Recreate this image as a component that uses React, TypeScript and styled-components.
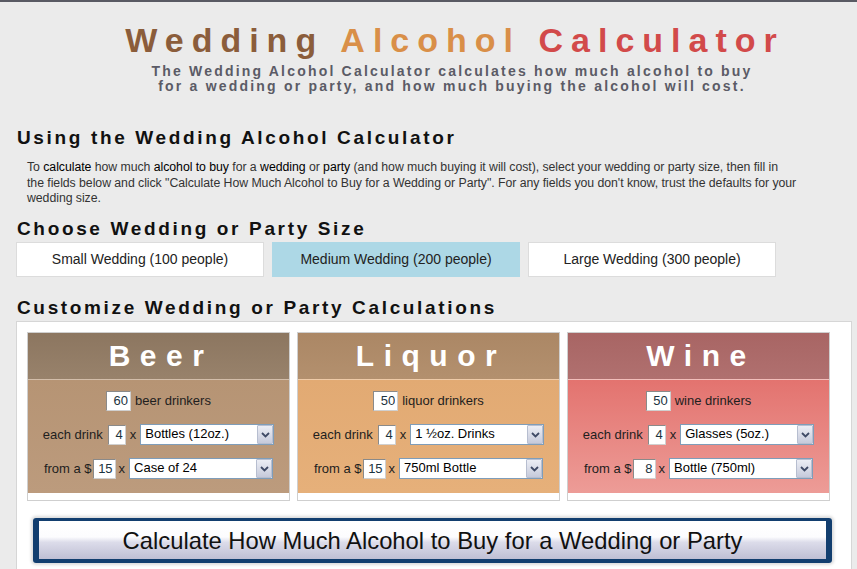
import React from "react";
import styled, { createGlobalStyle } from "styled-components";

const GlobalStyle = createGlobalStyle`
  html, body {
    margin: 0;
    padding: 0;
    background: #ebebeb;
  }
  body {
    font-family: "Liberation Sans", Arial, sans-serif;
    color: #222;
  }
`;

const Page = styled.div`
  min-height: 100vh;
  background: #ebebeb;
  border-top: 2px solid #595a63;
  padding-left: 16px;
  overflow: hidden;
  box-sizing: border-box;
`;

const Masthead = styled.header`
  width: 836px;
  box-sizing: border-box;
  padding-left: 42px;
  margin-top: 18px;
  text-align: center;
`;

const Title = styled.h1`
  margin: 0;
  font-size: 34px;
  line-height: 40px;
  font-weight: bold;
  letter-spacing: 8px;
  white-space: nowrap;
`;

const TitleWord = styled.span<{ $color: string }>`
  color: ${(p) => p.$color};
`;

const Tagline = styled.p`
  margin: 4px 0 0;
  padding-right: 6px;
  font-size: 14px;
  line-height: 15px;
  font-weight: bold;
  letter-spacing: 2.2px;
  color: #5b5b66;
  white-space: nowrap;
`;

const SectionTitle = styled.h2<{ $top: number }>`
  margin: ${(p) => p.$top}px 0 0 1px;
  font-size: 19px;
  line-height: 22px;
  font-weight: bold;
  letter-spacing: 2.65px;
  color: #111;
  white-space: nowrap;
`;

const Intro = styled.p`
  margin: 11px 0 0 11px;
  font-size: 12.3px;
  line-height: 15.5px;
  letter-spacing: -0.05px;
  color: #333;
  white-space: nowrap;
`;

const Key = styled.span`
  color: #000;
`;

const SizeRow = styled.div`
  display: flex;
  gap: 8px;
  margin-top: 2px;
`;

const SizeButton = styled.div<{ $active?: boolean }>`
  width: 248px;
  height: 35px;
  box-sizing: border-box;
  display: flex;
  align-items: center;
  justify-content: center;
  border: 1px solid ${(p) => (p.$active ? "#add8e6" : "#dcdcdc")};
  background: ${(p) => (p.$active ? "#add8e6" : "#fff")};
  font-size: 14px;
  color: #222;
  cursor: pointer;
`;

const Panel = styled.section`
  margin-top: 2px;
  width: 836px;
  box-sizing: border-box;
  background: #fff;
  border: 1px solid #d6d6d6;
  border-bottom: none;
  padding: 10px 0 20px 10px;
`;

const Cards = styled.div`
  display: flex;
  gap: 7px;
`;

const Card = styled.div`
  width: 263px;
  box-sizing: border-box;
  border: 1px solid #cfcfcf;
  background: #fff;
  padding-bottom: 7px;
`;

const CardHead = styled.div<{ $bg: string }>`
  height: 46px;
  line-height: 46px;
  padding-left: 5px;
  background: ${(p) => p.$bg};
  color: #fff;
  font-size: 30px;
  font-weight: bold;
  letter-spacing: 9.5px;
  text-align: center;
`;

const CardBody = styled.div<{ $bg: string }>`
  background: ${(p) => p.$bg};
  border-top: 1px solid rgba(255, 255, 255, 0.35);
  padding: 10px 0 13px;
  display: flex;
  flex-direction: column;
  align-items: center;
  gap: 12px;
`;

const Row = styled.div`
  display: flex;
  align-items: center;
  height: 22px;
  font-size: 13px;
  color: #1e1e1e;
  white-space: nowrap;
`;

const Text = styled.span<{ $ml?: number; $mr?: number }>`
  margin-left: ${(p) => p.$ml ?? 0}px;
  margin-right: ${(p) => p.$mr ?? 0}px;
`;

const NumInput = styled.input<{ $w: number }>`
  width: ${(p) => p.$w}px;
  height: 20px;
  box-sizing: border-box;
  border: 1px solid;
  border-color: #8a8a8a #d0d0d0 #d0d0d0 #8a8a8a;
  padding: 0 2px 0 0;
  margin: 0;
  font-family: "Liberation Sans", Arial, sans-serif;
  font-size: 13px;
  text-align: right;
  color: #1c3340;
  background: #fff;
`;

const SelectBox = styled.div<{ $w: number }>`
  position: relative;
  width: ${(p) => p.$w}px;
  height: 21px;
`;

const NativeSelect = styled.select`
  appearance: none;
  width: 100%;
  height: 100%;
  box-sizing: border-box;
  border: 1px solid #7f9db9;
  border-radius: 0;
  padding: 0 20px 2px 4px;
  margin: 0;
  font-family: "Liberation Sans", Arial, sans-serif;
  font-size: 13px;
  color: #000;
  background: #fff;
`;

const Arrow = styled.span`
  position: absolute;
  top: 1px;
  right: 1px;
  width: 16px;
  height: 19px;
  box-sizing: border-box;
  border: 1px solid #b7bed0;
  border-radius: 1px;
  background: linear-gradient(#eceef5, #c6cadb);
  display: flex;
  align-items: center;
  justify-content: center;
  pointer-events: none;
`;

const CalcButton = styled.button`
  display: block;
  margin: 17px 0 0 6px;
  width: 799px;
  height: 45px;
  box-sizing: border-box;
  padding: 2px 0 0;
  border-style: solid;
  border-color: #123e6f;
  border-width: 3px 6px 4px;
  border-radius: 3px;
  box-shadow: 0 0 3px 2px #dcdcdc;
  background: linear-gradient(
    to bottom,
    #ffffff 0%,
    #fcfcfe 42%,
    #dcdcea 56%,
    #bfbfd4 100%
  );
  font-family: "Liberation Sans", Arial, sans-serif;
  font-size: 23.8px;
  line-height: 36px;
  color: #111;
  text-align: center;
  cursor: pointer;
`;

function Chevron() {
  return (
    <svg width="9" height="6" viewBox="0 0 9 6">
      <path d="M1 1 L4.5 4.5 L8 1" fill="none" stroke="#3f4a66" strokeWidth="1.8" />
    </svg>
  );
}

function Dropdown({ width, value }: { width: number; value: string }) {
  return (
    <SelectBox $w={width}>
      <NativeSelect defaultValue={value}>
        <option>{value}</option>
      </NativeSelect>
      <Arrow>
        <Chevron />
      </Arrow>
    </SelectBox>
  );
}

interface DrinkCardProps {
  name: string;
  head: string;
  body: string;
  drinkers: number;
  label: string;
  perDrink: string;
  price: number;
  unit: string;
}

function DrinkCard(props: DrinkCardProps) {
  return (
    <Card>
      <CardHead $bg={props.head}>{props.name}</CardHead>
      <CardBody $bg={props.body}>
        <Row>
          <NumInput $w={25} defaultValue={props.drinkers} readOnly />
          <Text $ml={4}>{props.label}</Text>
        </Row>
        <Row>
          <Text $mr={5}>each drink</Text>
          <NumInput $w={18} defaultValue={4} readOnly />
          <Text $ml={4} $mr={4}>x</Text>
          <Dropdown width={134} value={props.perDrink} />
        </Row>
        <Row>
          <Text $mr={1}>from a $</Text>
          <NumInput $w={23} defaultValue={props.price} readOnly />
          <Text $ml={3} $mr={4}>x</Text>
          <Dropdown width={144} value={props.unit} />
        </Row>
      </CardBody>
    </Card>
  );
}

const drinks: DrinkCardProps[] = [
  {
    name: "Beer",
    head: "linear-gradient(#8c7660, #98826b)",
    body: "linear-gradient(#b69474, #bc9b7d)",
    drinkers: 60,
    label: "beer drinkers",
    perDrink: "Bottles (12oz.)",
    price: 15,
    unit: "Case of 24",
  },
  {
    name: "Liquor",
    head: "linear-gradient(#ab8765, #b3906e)",
    body: "linear-gradient(#e2aa73, #e6b07a)",
    drinkers: 50,
    label: "liquor drinkers",
    perDrink: "1 ½oz. Drinks",
    price: 15,
    unit: "750ml Bottle",
  },
  {
    name: "Wine",
    head: "linear-gradient(#a86564, #b0706f)",
    body: "linear-gradient(#e3736f, #ed9c97)",
    drinkers: 50,
    label: "wine drinkers",
    perDrink: "Glasses (5oz.)",
    price: 8,
    unit: "Bottle (750ml)",
  },
];

export default function App() {
  return (
    <>
      <GlobalStyle />
      <Page>
        <Masthead>
          <Title>
            <TitleWord $color="#8b5d3b">Wedding</TitleWord>{" "}
            <TitleWord $color="#d98f48">Alcohol</TitleWord>{" "}
            <TitleWord $color="#d24a4a">Calculator</TitleWord>
          </Title>
          <Tagline>
            The Wedding Alcohol Calculator calculates how much alcohol to buy
            <br />
            for a wedding or party, and how much buying the alcohol will cost.
          </Tagline>
        </Masthead>

        <SectionTitle $top={33}>Using the Wedding Alcohol Calculator</SectionTitle>
        <Intro>
          To <Key>calculate</Key> how much <Key>alcohol to buy</Key> for a{" "}
          <Key>wedding</Key> or <Key>party</Key> (and how much buying it will
          cost), select your wedding or party size, then fill in
          <br />
          the fields below and click "Calculate How Much Alcohol to Buy for a
          Wedding or Party". For any fields you don't know, trust the defaults
          for your
          <br />
          wedding size.
        </Intro>

        <SectionTitle $top={11}>Choose Wedding or Party Size</SectionTitle>
        <SizeRow>
          <SizeButton>Small Wedding (100 people)</SizeButton>
          <SizeButton $active>Medium Wedding (200 people)</SizeButton>
          <SizeButton>Large Wedding (300 people)</SizeButton>
        </SizeRow>

        <SectionTitle $top={20}>Customize Wedding or Party Calculations</SectionTitle>
        <Panel>
          <Cards>
            {drinks.map((d) => (
              <DrinkCard key={d.name} {...d} />
            ))}
          </Cards>
          <CalcButton>Calculate How Much Alcohol to Buy for a Wedding or Party</CalcButton>
        </Panel>
      </Page>
    </>
  );
}
